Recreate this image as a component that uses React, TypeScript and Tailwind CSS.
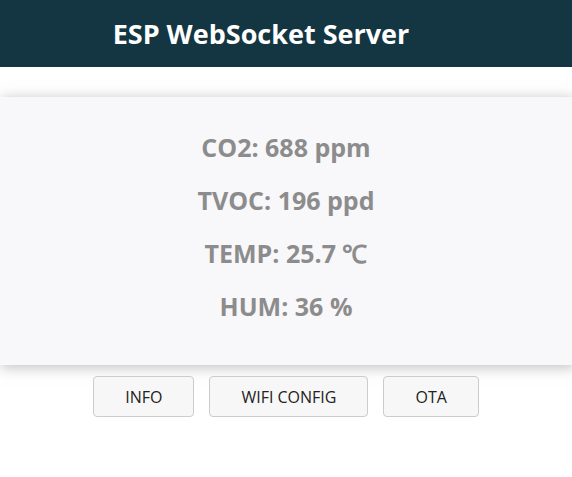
const readings = [
  { label: 'CO2', value: '688 ppm' },
  { label: 'TVOC', value: '196 ppd' },
  { label: 'TEMP', value: '25.7 ℃' },
  { label: 'HUM', value: '36 %' },
];

const buttons = ['INFO', 'WIFI CONFIG', 'OTA'];

export default function App() {
  return (
    <div className="min-h-[477px] bg-white font-['Open_Sans',sans-serif]">
      {/* Top bar */}
      <div className="flex h-[67px] items-center justify-center bg-[#143642] pr-[50px]">
        <h1 className="text-[27px] font-bold leading-none text-white">ESP WebSocket Server</h1>
      </div>

      <div className="pt-[30px]">
        {/* Sensor card */}
        <div className="flex flex-col items-center gap-[23px] bg-[#f8f7f9] pt-[35px] pb-[44px] shadow-[2px_2px_12px_1px_rgba(140,140,140,0.5)]">
          {readings.map((r) => (
            <p key={r.label} className="text-[25px] font-bold leading-[30px] text-[#8c8c8c]">
              {r.label}: {r.value}
            </p>
          ))}
        </div>

        {/* Actions */}
        <div className="mt-[11px] flex justify-center gap-[15px]">
          {buttons.map((b) => (
            <button
              key={b}
              className="h-[41px] rounded-[4px] border border-[#cccccc] bg-[#f7f7f7] px-[31px] text-[16px] text-[#222222]"
            >
              {b}
            </button>
          ))}
        </div>
      </div>
    </div>
  );
}
